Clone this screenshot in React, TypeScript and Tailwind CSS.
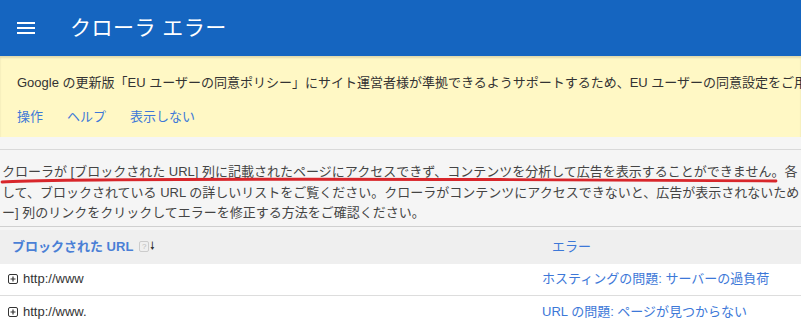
const font = "font-['Liberation_Sans','Noto_Sans_CJK_JP',sans-serif]"

const rows = [
  { url: 'http://www', error: 'ホスティングの問題: サーバーの過負荷' },
  { url: 'http://www.', error: 'URL の問題: ページが見つからない' },
]

const PlusBox = () => (
  <svg width="10" height="10" viewBox="0 0 10 10" className="shrink-0">
    <rect x="0.5" y="0.5" width="9" height="9" rx="1.5" fill="#fff" stroke="#333" />
    <path d="M2.5 5h5M5 2.5v5" stroke="#333" strokeWidth="1.2" />
  </svg>
)

const App = () => {
  return (
    <div className={`${font} relative w-[801px] h-[325px] overflow-hidden bg-[#f5f5f5] text-[#333]`}>
      {/* top bar */}
      <div className="flex items-center h-[56px] bg-[#1565c0] text-white">
        <svg width="18" height="14" viewBox="0 0 18 14" className="ml-[17px]">
          <path d="M0 2h18M0 7h18M0 12h18" stroke="#fff" strokeWidth="2.2" />
        </svg>
        <h1 className="ml-[35px] text-[21px] tracking-[0.5px]">クローラ エラー</h1>
      </div>

      {/* notice */}
      <div className="h-[81px] bg-[#fff8c5] shadow-[inset_0_2px_2px_rgba(0,0,0,0.12)] pl-[17px] pt-[17px]">
        <p className="whitespace-nowrap text-[13px]">
          Google の更新版「EU ユーザーの同意ポリシー」にサイト運営者様が準拠できるようサポートするため、EU ユーザーの同意設定をご用意しました。
        </p>
        <div className="flex gap-[24px] mt-[14px] text-[13px] text-[#3d78d8]">
          <span>操作</span>
          <span>ヘルプ</span>
          <span>表示しない</span>
        </div>
      </div>

      {/* description */}
      <div className="mt-[12px] border-t border-[#d9d9d9] pt-[12px] pb-[2px] pl-[2px] text-[13px] leading-[20.5px] text-[#444] whitespace-nowrap">
        <p>クローラが [ブロックされた URL] 列に記載されたページにアクセスできず、コンテンツを分析して広告を表示することができません。各</p>
        <p>して、ブロックされている URL の詳しいリストをご覧ください。クローラがコンテンツにアクセスできないと、広告が表示されないため</p>
        <p>ー] 列のリンクをクリックしてエラーを修正する方法をご確認ください。</p>
      </div>
      <div className="border-t border-[#d0d0d0]" />

      {/* table */}
      <div className="mt-[3px] flex items-center h-[34px] bg-[#efefef] text-[13px] text-[#3d78d8]">
        <div className="flex items-center w-[540px] pl-[12px]">
          <span className="font-bold text-[#4a7fd6]">ブロックされた URL</span>
          <span className="ml-[6px] flex items-center justify-center w-[10px] h-[11px] border border-[#ccc] rounded-[2px] text-[8px] text-[#bbb] leading-none">?</span>
          <span className="ml-[1px] text-[11px] text-[#333] leading-none">🠗</span>
        </div>
        <span className="ml-[12px]">エラー</span>
      </div>
      {rows.map((r, i) => (
        <div key={i} className={`flex items-center h-[32px] bg-white text-[13px] ${i === 0 ? 'border-b border-[#ddd]' : ''}`}>
          <div className="flex items-center gap-[5px] w-[542px] pl-[8px]">
            <PlusBox />
            <span>{r.url}</span>
          </div>
          <span className="text-[#3d78d8]">{r.error}</span>
        </div>
      ))}

      {/* red annotation underline */}
      <svg className="absolute left-0 top-[176px]" width="801" height="10" viewBox="0 0 801 10">
        <path d="M2 6 C 40 3, 300 3, 500 3.5 S 740 4, 776 5" stroke="#d8262b" strokeWidth="2.8" fill="none" strokeLinecap="round" />
      </svg>
    </div>
  )
}

export default App
